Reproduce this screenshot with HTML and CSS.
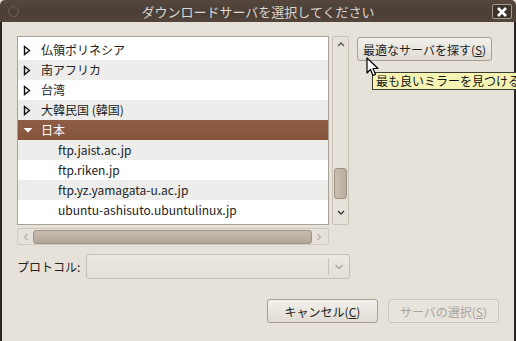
FILE: index.html
```html
<!DOCTYPE html>
<html lang="ja">
<head>
    <meta charset="UTF-8">
    <title>ダウンロードサーバを選択してください</title>
    <link rel="stylesheet" href="styles.css">
</head>
<body>
<div class="ventana">
    <div class="barraTitulo">
        <span class="puntoMenu"></span>
        <span class="titulo">ダウンロードサーバを選択してください</span>
        <span class="cerrar">
            <svg width="12" height="10" viewBox="0 0 12 10"><path d="M2 1 L10 9 M10 1 L2 9" stroke="#fff" stroke-width="2.6"/></svg>
        </span>
    </div>
    <div class="cuerpo">
        <div class="superior">
            <div class="columnaLista">
                <div class="filaLista">
                    <div class="arbol">
                        <div class="fila blanca"><span class="flecha"><svg width="8" height="11" viewBox="0 0 8 11"><path d="M1.5 1.5 L6.5 5.5 L1.5 9.5 Z" fill="none" stroke="#111" stroke-width="1.4"/></svg></span>仏領ポリネシア</div>
                        <div class="fila gris"><span class="flecha"><svg width="8" height="11" viewBox="0 0 8 11"><path d="M1.5 1.5 L6.5 5.5 L1.5 9.5 Z" fill="none" stroke="#111" stroke-width="1.4"/></svg></span>南アフリカ</div>
                        <div class="fila blanca"><span class="flecha"><svg width="8" height="11" viewBox="0 0 8 11"><path d="M1.5 1.5 L6.5 5.5 L1.5 9.5 Z" fill="none" stroke="#111" stroke-width="1.4"/></svg></span>台湾</div>
                        <div class="fila gris"><span class="flecha"><svg width="8" height="11" viewBox="0 0 8 11"><path d="M1.5 1.5 L6.5 5.5 L1.5 9.5 Z" fill="none" stroke="#111" stroke-width="1.4"/></svg></span>大韓民国 (韓国)</div>
                        <div class="fila elegida"><span class="flecha"><svg width="10" height="8" viewBox="0 0 10 8"><path d="M0.5 2 L9.5 2 L5 6.5 Z" fill="#fff"/></svg></span>日本</div>
                        <div class="fila gris hija">ftp.jaist.ac.jp</div>
                        <div class="fila blanca hija">ftp.riken.jp</div>
                        <div class="fila gris hija">ftp.yz.yamagata-u.ac.jp</div>
                        <div class="fila blanca hija">ubuntu-ashisuto.ubuntulinux.jp</div>
                    </div>
                    <div class="barraVertical">
                        <svg width="10" height="6" viewBox="0 0 10 6"><path d="M2 5 L5 2 L8 5" fill="none" stroke="#555" stroke-width="1.3"/></svg>
                        <div class="espacio"></div>
                        <div class="pulgarV"></div>
                        <svg class="abajo" width="10" height="6" viewBox="0 0 10 6"><path d="M2 1 L5 4 L8 1" fill="none" stroke="#333" stroke-width="1.3"/></svg>
                    </div>
                </div>
                <div class="barraHorizontal">
                    <svg width="6" height="10" viewBox="0 0 6 10"><path d="M4.5 2 L1.5 5 L4.5 8" fill="none" stroke="#b5aea4" stroke-width="1.2"/></svg>
                    <div class="pulgarH"></div>
                    <svg width="6" height="10" viewBox="0 0 6 10"><path d="M1.5 2 L4.5 5 L1.5 8" fill="none" stroke="#b5aea4" stroke-width="1.2"/></svg>
                </div>
            </div>
            <div class="lateral">
                <button class="boton">最適なサーバを探す(<u>S</u>)</button>
            </div>
        </div>
        <div class="protocolo">
            <span class="etiqueta">プロトコル:</span>
            <div class="combo">
                <div class="comboTexto"></div>
                <div class="comboFlecha">
                    <svg width="10" height="6" viewBox="0 0 10 6"><path d="M1.5 1 L5 4.5 L8.5 1" fill="none" stroke="#a59e94" stroke-width="1.2"/></svg>
                </div>
            </div>
        </div>
        <div class="acciones">
            <button class="boton accion">キャンセル(<u>C</u>)</button>
            <button class="boton accion apagado">サーバの選択(<u>S</u>)</button>
        </div>
    </div>
    <div class="ayuda">最も良いミラーを見つける</div>
    <svg class="puntero" width="14" height="20" viewBox="0 0 14 20"><path d="M1 1 L1 16 L4.5 12.5 L7 18.5 L9.5 17.5 L7 11.5 L12 11.5 Z" fill="#fff" stroke="#000" stroke-width="1.2" stroke-linejoin="round"/></svg>
</div>
</body>
</html>
```

FILE: styles.css
```css
body {
    margin: 0;
    font-family: "Noto Sans CJK JP", "Noto Sans", sans-serif;
    font-size: 12px;
    color: #222;
    background-color: #e7e2d9;
}

.ventana {
    position: relative;
    width: 516px;
    height: 341px;
    overflow: hidden;
}

.barraTitulo {
    height: 22px;
    display: flex;
    align-items: center;
    justify-content: center;
    background: linear-gradient(#55473d, #4a3e36 60%, #53453b);
    border-radius: 5px 5px 0 0;
    position: relative;
}

.puntoMenu {
    position: absolute;
    left: 8px;
    top: 6px;
    width: 9px;
    height: 9px;
    border-radius: 50%;
    border: 1px solid #6e6158;
}

.titulo {
    color: #ddd8cf;
    font-size: 13px;
}

.cerrar {
    position: absolute;
    right: 4px;
    top: 4px;
    width: 18px;
    height: 13px;
    border: 1px solid #a59a91;
    border-radius: 2px;
    background: #3d332d;
    display: flex;
    align-items: center;
    justify-content: center;
}

.cuerpo {
    height: 319px;
    border: 2px solid #2b2623;
    border-top: none;
    padding: 14px 0 0 15px;
}

.superior {
    display: flex;
}

.columnaLista {
    display: flex;
    flex-direction: column;
}

.filaLista {
    display: flex;
}

.arbol {
    width: 310px;
    height: 184px;
    border: 1px solid #a7a197;
    background: #fff;
    padding-top: 3px;
    overflow: hidden;
}

.fila {
    height: 20px;
    line-height: 20px;
    display: flex;
    align-items: center;
    padding-left: 5px;
    white-space: nowrap;
}

.blanca {
    background: #fff;
}

.gris {
    background: #ededec;
}

.elegida {
    background: linear-gradient(#8f5d45, #84543d);
    color: #fff;
}

.flecha {
    width: 18px;
    display: flex;
    align-items: center;
}

.hija {
    padding-left: 40px;
}

.barraVertical {
    width: 15px;
    height: 183px;
    margin-left: 3px;
    border: 1px solid #c9c2b7;
    border-radius: 2px;
    display: flex;
    flex-direction: column;
    align-items: center;
    padding-top: 4px;
}

.espacio {
    flex: 1;
}

.pulgarV {
    width: 11px;
    height: 29px;
    border: 1px solid #9b9083;
    border-radius: 3px;
    background: linear-gradient(90deg, #c9bfb2, #b8ac9e);
}

.abajo {
    margin: 11px 0 8px;
}

.barraHorizontal {
    width: 312px;
    height: 17px;
    margin-top: 3px;
    border: 1px solid #cfc9bf;
    border-radius: 2px;
    display: flex;
    align-items: center;
    gap: 4px;
    padding: 0 6px 0 5px;
    box-sizing: border-box;
}

.pulgarH {
    flex: 1;
    height: 12px;
    border: 1px solid #9e9386;
    border-radius: 3px;
    background: linear-gradient(#c7bcaf, #b2a698);
}

.lateral {
    padding: 1px 0 0 8px;
}

.boton {
    font-family: "Noto Sans CJK JP", "Noto Sans", sans-serif;
    font-size: 12px;
    color: #222;
    height: 24px;
    padding: 0 5px;
    border: 1px solid #a8a095;
    border-radius: 3px;
    background: linear-gradient(#f3f1ed, #e0dbd3);
    white-space: nowrap;
}

.protocolo {
    display: flex;
    align-items: center;
    margin-top: 9px;
}

.etiqueta {
    width: 69px;
}

.combo {
    width: 264px;
    height: 25px;
    border: 1px solid #c6bfb4;
    border-radius: 3px;
    background: linear-gradient(#ece8e2, #e4dfd6);
    display: flex;
    box-sizing: border-box;
}

.comboTexto {
    flex: 1;
}

.comboFlecha {
    width: 20px;
    border-left: 1px solid #c6bfb4;
    margin: 3px 0;
    display: flex;
    align-items: center;
    justify-content: center;
}

.acciones {
    display: flex;
    justify-content: flex-end;
    gap: 10px;
    margin-top: 20px;
    padding-right: 15px;
}

.accion {
    width: 111px;
}

.apagado {
    color: #aaa49b;
    background: #e8e3db;
    border-color: #cdc6bc;
}

.ayuda {
    position: absolute;
    left: 372px;
    top: 72px;
    height: 16px;
    line-height: 16px;
    padding: 0 3px;
    background: #f6f4b4;
    border: 1px solid #3c3c30;
    color: #111;
    white-space: nowrap;
}

.puntero {
    position: absolute;
    left: 366px;
    top: 57px;
}
```
